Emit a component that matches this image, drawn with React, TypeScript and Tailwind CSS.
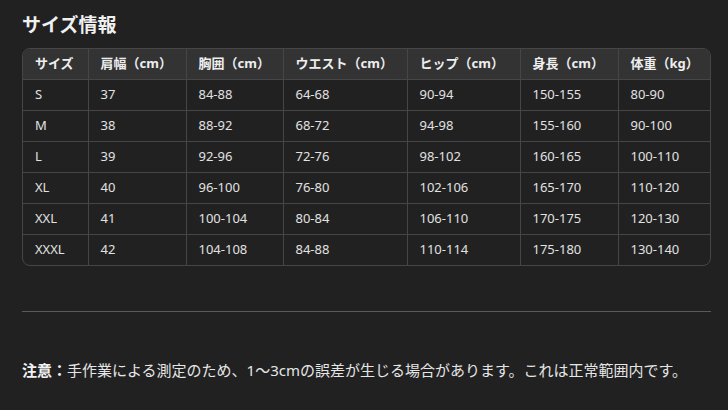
const headers = ["サイズ", "肩幅（cm）", "胸囲（cm）", "ウエスト（cm）", "ヒップ（cm）", "身長（cm）", "体重（kg）"]
const widths = ["w-[65px]", "w-[98px]", "w-[97px]", "w-[124px]", "w-[113px]", "w-[98px]", "w-[94px]"]

const rows = [
  ["S", "37", "84-88", "64-68", "90-94", "150-155", "80-90"],
  ["M", "38", "88-92", "68-72", "94-98", "155-160", "90-100"],
  ["L", "39", "92-96", "72-76", "98-102", "160-165", "100-110"],
  ["XL", "40", "96-100", "76-80", "102-106", "165-170", "110-120"],
  ["XXL", "41", "100-104", "80-84", "106-110", "170-175", "120-130"],
  ["XXXL", "42", "104-108", "84-88", "110-114", "175-180", "130-140"],
]

export default function App() {
  return (
    <div
      className="min-h-[410px] w-full bg-[#212121] text-[#e8e8e8]"
      style={{ fontFamily: '"Noto Sans", "Noto Sans CJK JP", sans-serif' }}
    >
      <div className="w-[689px] pl-[22px] box-content pt-[12px]">
        <h2 className="text-[19px] font-bold leading-[26px] text-[#f0f0f0]">サイズ情報</h2>

        <div className="mt-[10px] overflow-hidden rounded-[8px] border border-[#464646]">
          <table className="w-full table-fixed border-collapse text-[13px]">
            <thead>
              <tr className="bg-[#333333]">
                {headers.map((h, i) => (
                  <th
                    key={h}
                    className={`${widths[i]} h-[30px] border-l border-[#464646] px-[12px] text-left font-bold text-[#eeeeee] first:border-l-0`}
                  >
                    {h}
                  </th>
                ))}
              </tr>
            </thead>
            <tbody>
              {rows.map((r) => (
                <tr key={r[0]} className="border-t border-[#464646]">
                  {r.map((c, i) => (
                    <td
                      key={i}
                      className="h-[31px] border-l border-[#464646] px-[12px] font-normal text-[#e2e2e2] first:border-l-0"
                    >
                      {c}
                    </td>
                  ))}
                </tr>
              ))}
            </tbody>
          </table>
        </div>

        <hr className="mt-[45px] border-t border-[#5a5a5a]" />

        <p className="mt-[48px] text-[15px] leading-[20px] text-[#e6e6e6]">
          <span className="font-bold text-[#f2f2f2]">注意：</span>
          手作業による測定のため、1〜3cmの誤差が生じる場合があります。これは正常範囲内です。
        </p>
      </div>
    </div>
  )
}
